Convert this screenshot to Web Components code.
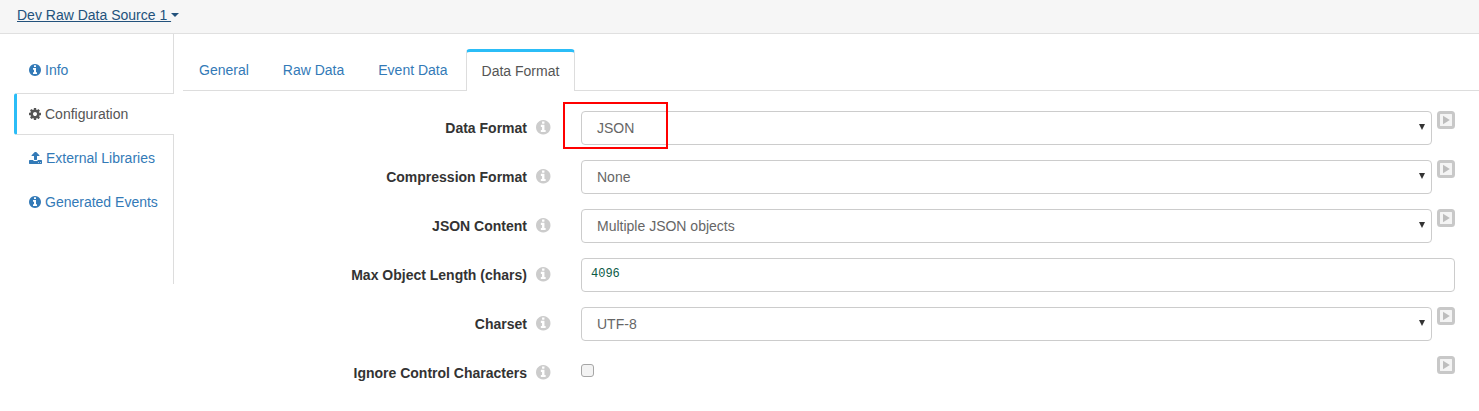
<!DOCTYPE html>
<html lang="en">
<head>
<meta charset="utf-8">
<title>Data Format</title>
<style>
html,body{margin:0;padding:0;background:#fff;font:14px/20px "Liberation Sans",Arial,sans-serif;color:#333}
body{height:411px;overflow:hidden}
</style>
</head>
<body>
<app-header>Dev Raw Data Source 1 </app-header>
<main-layout>
  <side-nav slot="nav">
    <nav-item icon="info">Info</nav-item>
    <nav-item icon="cog" active>Configuration</nav-item>
    <nav-item icon="upload">External Libraries</nav-item>
    <nav-item icon="info">Generated Events</nav-item>
  </side-nav>
  <tab-bar>
    <tab-item>General</tab-item>
    <tab-item>Raw Data</tab-item>
    <tab-item>Event Data</tab-item>
    <tab-item active>Data Format</tab-item>
  </tab-bar>
  <form-row label="Data Format" play><select-box highlight>JSON</select-box></form-row>
  <form-row label="Compression Format" play><select-box>None</select-box></form-row>
  <form-row label="JSON Content" play><select-box>Multiple JSON objects</select-box></form-row>
  <form-row label="Max Object Length (chars)"><text-box>4096</text-box></form-row>
  <form-row label="Charset" play><select-box>UTF-8</select-box></form-row>
  <form-row label="Ignore Control Characters" play><check-box></check-box></form-row>
</main-layout>
<script>
const ICONS={
 info:['0 128 1536 1536','M1024 1376v-160q0-14-9-23t-23-9h-96v-512q0-14-9-23t-23-9h-320q-14 0-23 9t-9 23v160q0 14 9 23t23 9h96v320h-96q-14 0-23 9t-9 23v160q0 14 9 23t23 9h448q14 0 23-9t9-23zm-128-896v-160q0-14-9-23t-23-9h-192q-14 0-23 9t-9 23v160q0 14 9 23t23 9h192q14 0 23-9t9-23zm640 416q0 209-103 385.5t-279.5 279.5-385.5 103-385.5-103-279.5-279.5-103-385.5 103-385.5 279.5-279.5 385.5-103 385.5 103 279.5 279.5 103 385.5z'],
 cog:['128 128 1536 1536','M1152 896q0-106-75-181t-181-75-181 75-75 181 75 181 181 75 181-75 75-181zm512-109v222q0 12-8 23t-20 13l-185 28q-19 54-39 91 35 50 107 138 10 12 10 25t-9 23q-27 37-99 108t-94 71q-12 0-26-9l-138-108q-44 23-91 38-16 136-29 186-7 28-36 28h-222q-14 0-24.5-8.5t-11.5-21.5l-28-184q-49-16-90-37l-141 107q-10 9-25 9-14 0-25-11-126-114-165-168-7-10-7-23 0-12 8-23 15-21 51-66.5t54-70.5q-27-50-41-99l-183-27q-13-2-21-12.5t-8-23.5v-222q0-12 8-23t19-13l186-28q14-46 39-92-40-57-107-138-10-12-10-24 0-10 9-23 26-36 98.5-107.5t94.5-71.5q13 0 26 10l138 107q44-23 91-38 16-136 29-186 7-28 36-28h222q14 0 24.5 8.5t11.5 21.5l28 184q49 16 90 37l142-107q9-9 24-9 13 0 25 10 129 119 165 170 7 8 7 22 0 12-8 23-15 21-51 66.5t-54 70.5q26 50 41 98l183 28q13 2 21 12.5t8 23.5z'],
 upload:['64 128 1664 1536','M1344 1472q0-26-19-45t-45-19-45 19-19 45 19 45 45 19 45-19 19-45zm256 0q0-26-19-45t-45-19-45 19-19 45 19 45 45 19 45-19 19-45zm128-224v320q0 40-28 68t-68 28h-1472q-40 0-68-28t-28-68v-320q0-40 28-68t68-28h427q21 56 70.5 92t110.5 36h256q61 0 110.5-36t70.5-92h427q40 0 68 28t28 68zm-325-648q-17 40-59 40h-256v448q0 26-19 45t-45 19h-256q-26 0-45-19t-19-45v-448h-256q-42 0-59-40-17-39 14-69l448-448q18-19 45-19t45 19l448 448q31 30 14 69z']
};
const svgIcon=(n,w,h)=>`<svg width="${w}" height="${h||w}" viewBox="${ICONS[n][0]}" fill="currentColor" aria-hidden="true"><path d="${ICONS[n][1]}"/></svg>`;
function def(name,css,html){
  customElements.define(name,class extends HTMLElement{
    connectedCallback(){
      if(this.shadowRoot)return;
      const r=this.attachShadow({mode:'open'});
      r.innerHTML=`<style>${css}</style>`+(typeof html==='function'?html(this):html);
    }
  });
}
def('app-header',`:host{display:flex;align-items:center;box-sizing:border-box;height:34px;padding:0 0 4px 17px;background:#f6f6f6;border-bottom:1px solid #e0e0e0}
 a{color:#23527c;text-decoration:underline;white-space:pre}
 i{display:inline-block;width:0;height:0;margin:1px 0 0 0;border:4px solid transparent;border-top-color:#23527c;border-bottom:0}`,
 `<a><slot></slot></a><i></i>`);
def('main-layout',`:host{display:grid;grid-template-columns:174px 1fr;column-gap:9px}
 .body{min-width:0}`,
 `<div class="nav"><slot name="nav"></slot></div><div class="body"><slot></slot></div>`);
def('side-nav',`:host{display:block;box-sizing:border-box;width:174px;height:250px;padding-top:14px;border-right:1px solid #ddd}`,`<slot></slot>`);
def('nav-item',`:host{display:block;height:44px;padding:1px 0;box-sizing:border-box;margin-left:14px;color:#337ab7}
 div{height:100%;box-sizing:border-box;display:flex;align-items:center;padding-left:15px}
 svg{margin-right:4px;flex:none}
 :host([active]){margin-right:-1px;color:#555}
 :host([active]) div{background:#fff;padding-left:12px;border-left:3px solid #2bbdf7;border-top:1px solid #ddd;border-bottom:1px solid #ddd;border-radius:3px 0 0 3px}`,
 h=>{const n=h.getAttribute('icon');return `<div>${n==='upload'?svgIcon(n,13,12):svgIcon(n,12)}<span><slot></slot></span></div>`});
def('tab-bar',`:host{display:flex;gap:2px;margin-top:15px;height:41px;border-bottom:1px solid #ddd}`,`<slot></slot>`);
def('tab-item',`:host{display:flex;align-items:center;box-sizing:border-box;height:42px;padding:0 16px;color:#337ab7;white-space:nowrap}
 :host([active]){padding:0 15px 2px;color:#555;background:#fff;border:1px solid #ddd;border-top:3px solid #2bbdf7;border-bottom:0;border-radius:4px 4px 0 0}`,`<slot></slot>`);
def('form-row',`:host{display:flex;align-items:flex-start;height:34px;margin-bottom:15px}
 :host(:first-of-type){margin-top:20px}
 .lab{width:344px;height:34px;line-height:34px;text-align:right;font-weight:bold;color:#333;white-space:nowrap;flex:none}
 .ic{width:54px;flex:none;height:34px;display:flex;align-items:center;padding:0 0 1px 9px;box-sizing:border-box;color:#ccc}
 .ctl{flex:none;width:874px;display:flex;align-items:flex-start;gap:5px}
 ::slotted(*){flex:1;min-width:0}
 svg.p{flex:none}`,
 h=>`<div class="lab">${h.getAttribute('label')}</div><div class="ic">${svgIcon('info',14.5)}</div><div class="ctl"><slot></slot>${h.hasAttribute('play')?`<svg class="p" width="18" height="18" viewBox="0 0 18 18"><rect x="1.5" y="1.5" width="15" height="15" rx="2" fill="#f4f4f4" stroke="#c8c8c8" stroke-width="3"/><path d="M6 4.8 12.8 9 6 13.2z" fill="#bdbdbd"/></svg>`:''}</div>`);
const box=`display:block;position:relative;box-sizing:border-box;height:34px;line-height:32px;border:1px solid #ccc;border-radius:4px;background:#fff;color:#666;`;
def('select-box',`:host{${box}padding-left:15px}
 .arrow{position:absolute;right:6px;top:12px;width:0;height:0;border:3px solid transparent;border-top:6px solid #333;border-bottom:0}
 .mark{position:absolute;left:-19px;top:-10px;width:105px;height:47px;box-sizing:border-box;border:2px solid #f00}`,
 h=>`<slot></slot><span class="arrow"></span>${h.hasAttribute('highlight')?'<span class="mark"></span>':''}`);
def('text-box',`:host{${box}padding-left:9px;color:#0b5a45;font:12px/30px "Liberation Mono",monospace}`,`<slot></slot>`);
def('check-box',`:host{display:block;height:34px}
 input{appearance:none;-webkit-appearance:none;display:block;box-sizing:border-box;margin:8px 0 0;width:13px;height:13px;background:#f3f3f3;border:1px solid #a6a6a6;border-radius:3px}`,`<input type="checkbox" aria-label="Ignore Control Characters"><slot></slot>`);
</script>
</body>
</html>
